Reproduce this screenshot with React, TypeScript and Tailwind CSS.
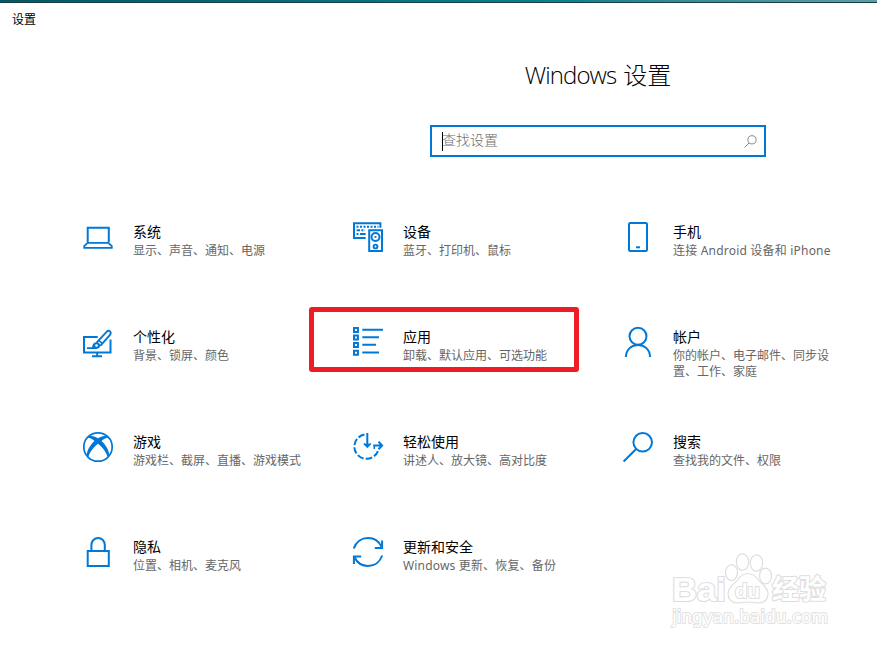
import React from 'react';

type Item = { title: string; desc: string; icon: React.ReactNode; highlighted?: boolean; descClass?: string };

function Icon({ children }: { children: React.ReactNode }) {
  return (
    <svg
      viewBox="0 0 30 30"
      className="h-[30px] w-[30px] shrink-0 overflow-visible"
      fill="none"
      stroke="#0078d7"
      strokeWidth="2"
    >
      {children}
    </svg>
  );
}

const items: Item[] = [
  {
    title: '系统',
    desc: '显示、声音、通知、电源',
    icon: (
      <Icon>
        <path d="M4.7 20V5.8h21.1V20" />
        <path d="M4.6 20.9h20.8l3.4 3.3v1.6H1.2v-1.6z" strokeWidth="1.8" />
      </Icon>
    ),
  },
  {
    title: '设备',
    desc: '蓝牙、打印机、鼠标',
    icon: (
      <Icon>
        <path d="M12.6 16H1V1.2h26.4v4.6" />
        <path d="M3.5 4.8h22" strokeDasharray="2 1.5" />
        <path d="M3.5 8.2h8.5" strokeDasharray="3.6 1.3 2 1.3" />
        <path d="M3.5 12h2M7 12h5.6" />
        <path d="M16.2 8.2h12.8v20.8h-12.8z" />
        <circle cx="22.5" cy="15" r="4" />
        <circle cx="22.5" cy="15" r="1.1" fill="#0078d7" stroke="none" />
        <circle cx="22.5" cy="24.5" r="1.9" strokeWidth="1.9" />
      </Icon>
    ),
  },
  {
    title: '手机',
    desc: '连接 Android 设备和 iPhone',
    descClass: 'whitespace-nowrap tracking-[0.2px]',
    icon: (
      <Icon>
        <rect x="6" y="1" width="18" height="28" rx="1.2" />
        <path d="M13 25.3h4" />
      </Icon>
    ),
  },
  {
    title: '个性化',
    desc: '背景、锁屏、颜色',
    icon: (
      <Icon>
        <path d="M14.7 10H1v15.5h26.5V12.5" />
        <path d="M14.2 25.5v3.7M9 29.2h10" />
        <path d="M13.6 15.6 23.8 4.6q1.8-1.5 3.2-.2t.2 3.2L17.3 18.8" strokeWidth="1.9" />
        <path d="m15.7 13.3 3.7 3.3" strokeWidth="1.6" />
        <path d="M4 22v-1.7h5c.6-3.6 2.3-5.3 4.9-5 2.6.3 3.9 2.6 2.9 4.6-1 1.9-3.5 2.1-5.8 2.1z" fill="#0078d7" stroke="none" />
        <circle cx="13.5" cy="18.5" r="1.3" fill="#fff" stroke="none" />
      </Icon>
    ),
  },
  {
    title: '应用',
    desc: '卸载、默认应用、可选功能',
    highlighted: true,
    icon: (
      <Icon>
        <path d="M1 1h3.9v3.9H1zM1 8.5h3.9v3.9H1zM1 16h3.9v3.9H1zM1 23.8h3.9v3.9H1z" />
        <path d="M9.3 2.8H30M9.3 10.2H26M9.3 17.8H23M9.3 25.4H26" />
      </Icon>
    ),
  },
  {
    title: '帐户',
    desc: '你的帐户、电子邮件、同步设置、工作、家庭',
    descClass: '',
    icon: (
      <Icon>
        <circle cx="15" cy="9.3" r="8.5" />
        <path d="M2.9 30C3.2 22.4 8.4 17.9 15 17.9S26.8 22.4 27.1 30" />
      </Icon>
    ),
  },
  {
    title: '游戏',
    desc: '游戏栏、截屏、直播、游戏模式',
    icon: (
      <Icon>
        <circle cx="15" cy="15" r="14.2" strokeWidth="1.7" />
        <path
          d="M6 4.3C9 3.2 12.4 4.5 15 6.3c2.6-1.8 6-3.1 9-2l1.5 1.4c-2.3-.4-4.8 1.2-7 3.3 4.4 4.2 7.9 9.5 7.6 14.7l-1.7 1.1c-1-4.7-5.2-9.6-9.4-13-4.2 3.4-8.4 8.3-9.4 13l-1.7-1.1C3.6 18.5 7.1 13.2 11.5 9c-2.2-2.1-4.7-3.7-7-3.3z"
          fill="#0078d7"
          stroke="none"
        />
      </Icon>
    ),
  },
  {
    title: '轻松使用',
    desc: '讲述人、放大镜、高对比度',
    icon: (
      <Icon>
        <path d="M11.5 2.6A12.2 12.2 0 1 0 25.4 17.5" strokeDasharray="6.6 2.2" />
        <path d="M14.3 1v13.300" />
        <path d="M10.8 11.8h7l-3.5 4z" fill="#0078d7" stroke="none" />
        <path d="M10.8 11.5l3.5 3.5 3.5-3.5" strokeWidth="1.5" />
        <path d="M20.3 13.5h8.5M25.5 9.8l3.6 3.7-3.6 3.7" />
        <path d="M21.3 13.5v3.5" strokeWidth="1.5" />
      </Icon>
    ),
  },
  {
    title: '搜索',
    desc: '查找我的文件、权限',
    icon: (
      <Icon>
        <circle cx="19.7" cy="10.3" r="9.3" />
        <path d="M13.2 17 .6 29.5" />
      </Icon>
    ),
  },
  {
    title: '隐私',
    desc: '位置、相机、麦克风',
    icon: (
      <Icon>
        <path d="M4.7 14h21.1v15H4.7z" />
        <path d="M8.4 14V8a6.7 7 0 0 1 13.4 0v6" />
      </Icon>
    ),
  },
  {
    title: '更新和安全',
    desc: 'Windows 更新、恢复、备份',
    descClass: 'whitespace-nowrap tracking-[0.17px]',
    icon: (
      <Icon>
        <path d="M.8 11.5C3 5 8.5 1.1 15 1.1c5.9 0 10.9 3.2 13.5 8.7" />
        <path d="M29.1 3.5v7.4h-7.3" />
        <path d="M29.2 18.5C27 25 21.5 28.9 15 28.9c-5.9 0-10.9-3.2-13.5-8.7" />
        <path d="M.9 27v-7.4h7.3" />
      </Icon>
    ),
  },
];

function Watermark() {
  return (
    <svg
      className="absolute left-[660px] top-[545px] h-[90px] w-[190px]"
      viewBox="0 0 190 90"
      fill="#fff"
      stroke="#dedede"
      strokeWidth="1.2"
      strokeLinejoin="round"
    >
      <g className="font-['Liberation_Sans','Noto_Sans_CJK_SC',sans-serif] font-bold">
        <text x="12" y="56" fontSize="33" textLength="54" lengthAdjust="spacingAndGlyphs" paintOrder="stroke" strokeWidth="2.2">
          Bai
        </text>
        <ellipse cx="71.5" cy="27.5" rx="6" ry="7.8" />
        <ellipse cx="82.5" cy="17" rx="6.2" ry="8.2" />
        <ellipse cx="96.5" cy="18" rx="6.2" ry="8.2" />
        <ellipse cx="105.5" cy="31" rx="6" ry="7.8" />
        <path d="M88 28.5c5 0 8 3 10.5 6.5 3 4 9.5 7 9.5 14 0 6-4.500 9-9.500 9-4 0-6.500-1-10.500-1s-6.500 1-10.500 1c-6 0-9.500-4-9.500-9 0-7 6.500-10 9.500-14 2.500-3.500 5.500-6.500 10.500-6.500z" />
        <text x="75" y="53" fontSize="21" textLength="25" lengthAdjust="spacingAndGlyphs" paintOrder="stroke" strokeWidth="2">
          du
        </text>
        <text x="112" y="54" fontSize="27" textLength="54" paintOrder="stroke" strokeWidth="2.2">
          经验
        </text>
      </g>
      <text
        x="12"
        y="77.5"
        fontSize="17"
        textLength="156"
        lengthAdjust="spacingAndGlyphs"
        paintOrder="stroke"
        stroke="#e2e2e2"
        strokeWidth="2"
        className="font-['DejaVu_Sans',sans-serif]"
      >
        jingyan.baidu.com
      </text>
    </svg>
  );
}

export default function App() {
  return (
    <div className="relative h-[648px] w-[877px] overflow-hidden bg-white font-['Noto_Sans','Noto_Sans_CJK_SC',sans-serif] text-black">
      <div className="h-[3px] border-b border-[#1e3a42] bg-linear-to-r from-[#005a68] via-[#088390] via-65% to-[#5c9ea5]" />
      <div className="pl-3 pt-[9px] text-xs leading-4">设置</div>

      <header className="ml-[430px] mt-[31px] flex w-[336px] flex-col items-center">
        <h1 className="flex h-8 gap-[7px] whitespace-nowrap font-['Open_Sans','Noto_Sans_CJK_SC',sans-serif] text-2xl leading-8 font-light">
          <span className="tracking-[-0.9px]">Windows</span>
          <span>设置</span>
        </h1>
        <div className="mt-[34px] flex h-8 w-full items-center border-2 border-[#0078d7] pl-2.5 pr-[7px]">
          <span className="h-[19px] w-px bg-black" />
          <span className="-ml-px flex-1 pb-0.5 text-sm leading-5 font-light text-[#6d6d6d]">查找设置</span>
          <svg viewBox="0 0 13 13" className="h-[13px] w-[13px]" fill="none" stroke="#8a8a8a" strokeWidth="1">
            <circle cx="8" cy="4.8" r="4.1" />
            <path d="M5.1 7.9.5 12.5" />
          </svg>
        </div>
      </header>

      <main className="ml-[83px] mt-[65px] grid w-[810px] auto-rows-[105px] grid-cols-[270px_270px_270px]">
        {items.map((item) => (
          <section key={item.title} className="relative flex items-start gap-5">
            {item.highlighted && (
              <span className="absolute -left-11 -top-5 h-[65px] w-[270px] rounded-[3px] border-5 border-[#ee1c25]" />
            )}
            {item.icon}
            <div className="w-[160px]">
              <h2 className="text-sm leading-5 font-normal">{item.title}</h2>
              <p className="mt-px text-xs leading-4 text-[#666]">
                <span className={item.descClass ?? 'whitespace-nowrap'}>{item.desc}</span>
              </p>
            </div>
          </section>
        ))}
      </main>

      <Watermark />
    </div>
  );
}
